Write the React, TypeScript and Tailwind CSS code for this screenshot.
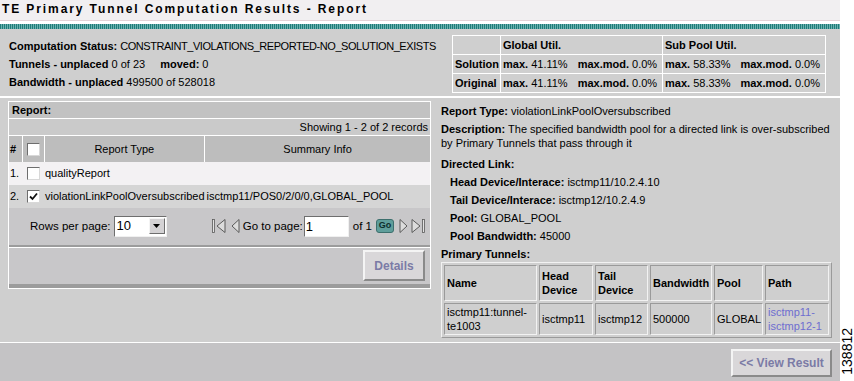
import React from 'react';

function Checkbox({ checked }: { checked?: boolean }) {
  return (
    <span className="inline-flex w-[13px] h-[13px] bg-white border border-t-[#6e6e6e] border-l-[#6e6e6e] border-b-[#d8d8d8] border-r-[#d8d8d8] items-center justify-center align-middle">
      {checked && (
        <svg width="9" height="9" viewBox="0 0 9 9">
          <path d="M1 4.5 L3.5 7 L8 1.5" fill="none" stroke="#111" strokeWidth="1.8" />
        </svg>
      )}
    </span>
  );
}

function NavIcon({ dir, bar }: { dir: 'left' | 'right'; bar?: boolean }) {
  const w = bar ? 14 : 9;
  const tri =
    dir === 'left'
      ? bar
        ? 'M13 1.5 L5 8 L13 14.5 Z'
        : 'M8 1.5 L1 8 L8 14.5 Z'
      : bar
      ? 'M1 1.5 L9 8 L1 14.5 Z'
      : 'M1 1.5 L8 8 L1 14.5 Z';
  const barX = dir === 'left' ? 1.5 : 12.5;
  return (
    <svg width={w} height="16" viewBox={`0 0 ${w} 16`}>
      {bar && <rect x={barX - 1} y="1.5" width="2" height="13" fill="#e2e2e2" stroke="#5a5a5a" strokeWidth="0.8" />}
      <path d={tri} fill="#dcdcdc" stroke="#5a5a5a" strokeWidth="1" />
    </svg>
  );
}

function Raised({ children, className }: { children: React.ReactNode; className: string }) {
  return (
    <div
      className={`flex items-center justify-center bg-[#d9d7d9] border-2 border-t-[#f4f4f4] border-l-[#f4f4f4] border-b-[#8a8a8a] border-r-[#8a8a8a] font-bold text-[12px] text-[#7b7ba6] ${className}`}
    >
      {children}
    </div>
  );
}

const util = [
  ['Solution', '41.11%', '0.0%', '58.33%', '0.0%'],
  ['Original', '41.11%', '0.0%', '58.33%', '0.0%'],
];

const cell = 'border border-t-[#9a9a9a] border-l-[#9a9a9a] border-b-[#f2f2f2] border-r-[#f2f2f2] px-[2px]';

export default function App() {
  return (
    <div className="w-[854px] h-[381px] bg-white flex text-[11px] text-black [font-family:'Liberation_Sans',Arial,sans-serif] overflow-hidden">
      <div className="w-[840px] flex flex-col">
        <div className="h-[21px] bg-[#f1eff1] border-b border-[#e4d2d6] pl-[2px] font-bold text-[12px] tracking-[1.9px] leading-[19px]">
          TE Primary Tunnel Computation Results - Report
        </div>
        <div className="h-[3px] bg-white" />
        <div className="h-[5px] bg-[repeating-linear-gradient(90deg,#1f7c79_0px,#1f7c79_1px,#6bb0ad_1px,#6bb0ad_2px)]" />

        {/* summary */}
        <div className="h-[67px] bg-[#cfcfcf] flex justify-between pl-[9px] pr-[14px]">
          <div className="pt-[8px] leading-[18px] whitespace-nowrap">
            <div>
              <b>Computation Status:</b> <span className="tracking-[-0.45px]">CONSTRAINT_VIOLATIONS_REPORTED-NO_SOLUTION_EXISTS</span>
            </div>
            <div>
              <b>Tunnels - unplaced</b> 0 of 23 <b className="ml-[12px]">moved:</b> 0
            </div>
            <div>
              <b>Bandwidth - unplaced</b> 499500 of 528018
            </div>
          </div>
          <table className="shrink-0 mt-[6px] h-[57px] w-[374px] table-fixed border border-white border-collapse whitespace-nowrap">
            <tbody>
              <tr className="h-[19px]">
                <td className="w-[48px] border border-white" />
                <td className="w-[162px] border border-white px-[2px] font-bold">Global Util.</td>
                <td className="border border-white px-[2px] font-bold">Sub Pool Util.</td>
              </tr>
              {util.map((r) => (
                <tr key={r[0]} className="h-[19px]">
                  <td className="border border-white px-[2px] font-bold">{r[0]}</td>
                  <td className="border border-white px-[2px]">
                    <b>max.</b> {r[1]}
                    <b className="ml-[10px]">max.mod.</b> {r[2]}
                  </td>
                  <td className="border border-white px-[2px]">
                    <b>max.</b> {r[3]}
                    <b className="ml-[10px]">max.mod.</b> {r[4]}
                  </td>
                </tr>
              ))}
            </tbody>
          </table>
        </div>
        <div className="h-[2px] bg-white" />

        {/* lower area */}
        <div className="h-[244px] bg-[#cfcfcf] flex pt-[3px]">
          <div className="ml-[8px] w-[423px] h-[188px] border border-white flex flex-col">
            <div className="h-[17px] bg-[#c2c2c2] border-b border-white pl-[3px] font-bold leading-[16px]">Report:</div>
            <div className="h-[16px] bg-[#cacaca] text-right pr-[2px] leading-[16px]">Showing 1 - 2 of 2 records</div>
            <table className="w-full border-collapse">
              <tbody>
                <tr className="h-[26px] bg-[#bdbdbd]">
                  <td className="w-[13px] border-r border-t border-white pl-[1px] font-bold">#</td>
                  <td className="w-[22px] border-r border-t border-white text-center">
                    <Checkbox />
                  </td>
                  <td className="w-[159px] border-r border-t border-white text-center">Report Type</td>
                  <td className="border-t border-white text-center">Summary Info</td>
                </tr>
                <tr className="h-[23px] bg-[#f3f1f3]">
                  <td className="pl-[1px]">1.</td>
                  <td className="text-center">
                    <Checkbox />
                  </td>
                  <td className="pl-[1px]">qualityReport</td>
                  <td />
                </tr>
                <tr className="h-[23px] bg-[#d5d5d5] whitespace-nowrap">
                  <td className="pl-[1px]">2.</td>
                  <td className="text-center">
                    <Checkbox checked />
                  </td>
                  <td className="pl-[1px]">violationLinkPoolOversubscribed</td>
                  <td className="pl-[2px]">isctmp11/POS0/2/0/0,GLOBAL_POOL</td>
                </tr>
              </tbody>
            </table>
            <div className="h-[38px] bg-[#c8c7c9] flex items-center pl-[21px] pr-[5px] text-[11.5px]">
              <span>Rows per page:</span>
              <div className="ml-[3px] w-[53px] h-[21px] bg-white border border-t-[#6e6e6e] border-l-[#6e6e6e] border-b-[#f0f0f0] border-r-[#f0f0f0] flex items-center justify-between pl-[2px] pr-[1px]">
                <span className="text-[13px]">10</span>
                <div className="w-[16px] h-[16px] bg-[#d4d2d4] border border-t-[#f4f4f4] border-l-[#f4f4f4] border-b-[#6e6e6e] border-r-[#6e6e6e] flex items-center justify-center">
                  <svg width="7" height="4" viewBox="0 0 7 4">
                    <path d="M0 0 H7 L3.5 4 Z" fill="#000" />
                  </svg>
                </div>
              </div>
              <div className="ml-auto flex items-center">
                <NavIcon dir="left" bar />
                <span className="ml-[5px]">
                  <NavIcon dir="left" />
                </span>
                <span className="ml-[3px]">Go to page:</span>
                <div className="ml-[1px] w-[45px] h-[21px] bg-white border border-t-[#6e6e6e] border-l-[#6e6e6e] border-b-[#f0f0f0] border-r-[#f0f0f0] pl-[1px] text-[13px] leading-[19px]">
                  1
                </div>
                <span className="ml-[4px]">of 1</span>
                <div className="ml-[4px] w-[18px] h-[14px] rounded-[3px] bg-[#5f9e9b] border border-[#3d6f6d] flex items-center justify-center text-[9px] font-bold text-[#0d2e2d]">
                  Go
                </div>
                <span className="ml-[5px]">
                  <NavIcon dir="right" />
                </span>
                <span className="ml-[3px]">
                  <NavIcon dir="right" bar />
                </span>
              </div>
            </div>
            <div className="h-[2px] bg-[#9c9c9c]" />
            <div className="h-[1px] bg-white" />
            <div className="h-[37px] bg-[#c8c7c9] flex items-center justify-end pr-[5px]">
              <Raised className="w-[62px] h-[31px]">Details</Raised>
            </div>
            <div className="h-[4px] bg-[#9c9c9c]" />
          </div>

          {/* details */}
          <div className="ml-[10px] w-[392px] flex flex-col whitespace-nowrap">
            <div className="leading-[18px] mt-[1px]">
              <b>Report Type:</b> violationLinkPoolOversubscribed
            </div>
            <div className="leading-[14px] pt-[2px] pb-[5px]">
              <b>Description:</b> The specified bandwidth pool for a directed link is over-subscribed
              <br />
              by Primary Tunnels that pass through it
            </div>
            <div className="leading-[18px] font-bold">Directed Link:</div>
            <div className="leading-[18px] pl-[9px]">
              <b>Head Device/Interace:</b> isctmp11/10.2.4.10
            </div>
            <div className="leading-[18px] pl-[9px]">
              <b>Tail Device/Interace:</b> isctmp12/10.2.4.9
            </div>
            <div className="leading-[18px] pl-[9px]">
              <b>Pool:</b> GLOBAL_POOL
            </div>
            <div className="leading-[18px] pl-[9px]">
              <b>Pool Bandwidth:</b> 45000
            </div>
            <div className="leading-[18px] font-bold">Primary Tunnels:</div>
            <table className="mt-[-1px] w-[391px] table-fixed border-separate border-spacing-[2px] border border-t-[#f2f2f2] border-l-[#f2f2f2] border-b-[#9a9a9a] border-r-[#9a9a9a] leading-[14px]">
              <tbody>
                <tr className="h-[36px] font-bold">
                  {['Name', 'Head Device', 'Tail Device', 'Bandwidth', 'Pool', 'Path'].map((h, i) => (
                    <td
                      key={h}
                      className={`${cell} ${
                        ['w-[93px]', 'w-[54px] whitespace-normal', 'w-[53px] whitespace-normal', 'w-[62px]', 'w-[49px]', ''][i]
                      }`}
                    >
                      {h}
                    </td>
                  ))}
                </tr>
                <tr className="h-[32px]">
                  <td className={cell}>
                    isctmp11:tunnel-
                    <br />
                    te1003
                  </td>
                  <td className={cell}>isctmp11</td>
                  <td className={cell}>isctmp12</td>
                  <td className={cell}>500000</td>
                  <td className={cell}>GLOBAL</td>
                  <td className={`${cell} text-[#6e6ed0]`}>
                    isctmp11-
                    <br />
                    isctmp12-1
                  </td>
                </tr>
              </tbody>
            </table>
          </div>
        </div>
        <div className="h-[1px] bg-white" />
        <div className="flex-1 bg-[#c4c3c5] flex justify-end items-start pt-[6px] pr-[8px]">
          <Raised className="w-[101px] h-[28px]">&lt;&lt; View Result</Raised>
        </div>
      </div>
      <div className="w-[14px] flex flex-col justify-end items-center pb-[6px]">
        <span className="[writing-mode:vertical-rl] rotate-180 text-[14px] leading-[14px]">138812</span>
      </div>
    </div>
  );
}
